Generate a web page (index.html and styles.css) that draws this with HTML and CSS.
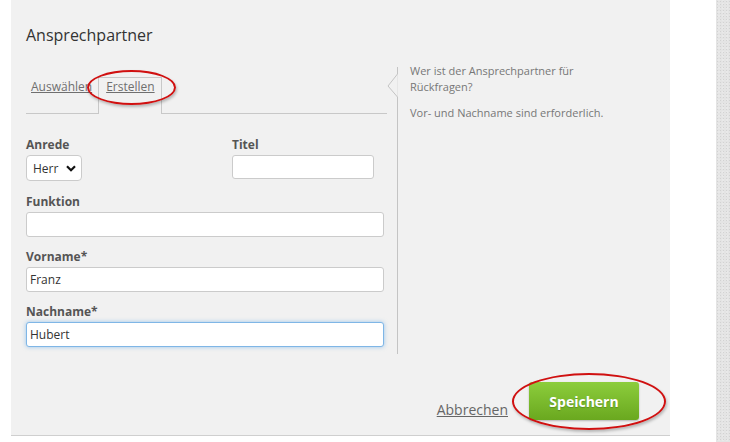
FILE: index.html
```html
<!DOCTYPE html>
<html lang="de">
<head>
<meta charset="utf-8">
<title>Ansprechpartner</title>
<link rel="stylesheet" href="styles.css">
</head>
<body>
<div class="page">
  <div class="panel">
    <h1 class="title">Ansprechpartner</h1>
    <div class="content">
      <div class="main">
        <div class="tabs">
          <a class="tab" href="#">Auswählen</a>
          <a class="tab tab-active" href="#">Erstellen</a>
        </div>
        <form class="form">
          <div class="row-two">
            <div class="field">
              <label class="label">Anrede</label>
              <div class="select">
                <span>Herr</span>
                <svg class="chev" width="10" height="7" viewBox="0 0 10 7"><path d="M1 1.2 L5 5.2 L9 1.2" fill="none" stroke="#111" stroke-width="2.2"/></svg>
              </div>
            </div>
            <div class="field">
              <label class="label">Titel</label>
              <input class="input input-titel" type="text">
            </div>
          </div>
          <div class="field">
            <label class="label">Funktion</label>
            <input class="input" type="text">
          </div>
          <div class="field">
            <label class="label">Vorname*</label>
            <input class="input" type="text" value="Franz">
          </div>
          <div class="field">
            <label class="label">Nachname*</label>
            <input class="input input-focus" type="text" value="Hubert">
          </div>
        </form>
      </div>
      <div class="divider">
        <svg class="caret" width="12" height="24" viewBox="0 0 12 24"><polyline points="10.5,0 1,12 10.5,23" fill="#f1f1f1" stroke="#c4c4c4" stroke-width="1"/><rect x="10.5" y="0.5" width="2" height="22" fill="#f1f1f1"/></svg>
      </div>
      <div class="help">
        <p>Wer ist der Ansprechpartner für Rückfragen?</p>
        <p>Vor- und Nachname sind erforderlich.</p>
      </div>
    </div>
    <div class="footer">
      <a class="cancel" href="#">Abbrechen</a>
      <button class="save" type="button">Speichern</button>
    </div>
  </div>
  <div class="gap"></div>
  <div class="texture"></div>
  <div class="mark mark-tab"></div>
  <div class="mark mark-save"></div>
</div>
</body>
</html>
```
FILE: styles.css
```css
html, body {
  margin: 0;
  padding: 0;
  background: #fff;
}
body {
  font-family: "Open Sans", "Liberation Sans", sans-serif;
  color: #333;
}
.page {
  position: relative;
  display: flex;
  width: 730px;
  height: 442px;
  overflow: hidden;
}
.panel {
  margin-left: 11px;
  width: 659px;
  height: 436px;
  box-sizing: border-box;
  background: #f1f1f1;
  border-bottom: 1px solid #cfcfcf;
  padding: 0 15px;
  display: flex;
  flex-direction: column;
  flex-shrink: 0;
}
.title {
  margin: 0;
  padding-top: 24px;
  font-size: 16px;
  line-height: 22px;
  font-weight: 400;
  color: #333;
}
.content {
  display: flex;
  margin-top: 17px;
}
.main {
  width: 361px;
  padding-top: 14px;
}
.tabs {
  display: flex;
  height: 36px;
  border-bottom: 1px solid #c8c8c8;
}
.tab {
  display: block;
  height: 37px;
  box-sizing: border-box;
  padding: 0 5px 19px 4px;
  border: 1px solid transparent;
  border-bottom: none;
  margin-bottom: -1px;
  font-size: 12px;
  line-height: 17px;
  color: #6f6f6f;
  text-decoration: underline;
}
.tab-active {
  padding: 0 6px 19px 7px;
  border-color: #c8c8c8;
  background: #f1f1f1;
}
.form {
  padding-top: 23px;
}
.row-two {
  display: flex;
}
.row-two .field:first-child {
  width: 206px;
}
.field {
  display: flex;
  flex-direction: column;
  align-items: flex-start;
  margin-bottom: 12px;
}
.row-two .field {
  margin-bottom: 13px;
}
.label {
  font-size: 12px;
  line-height: 16px;
  font-weight: 700;
  color: #555;
  margin-bottom: 2px;
}
.input {
  width: 358px;
  height: 25px;
  box-sizing: border-box;
  border: 1px solid #cbcbcb;
  border-radius: 3px;
  background: #fff;
  padding: 0 3px;
  font-family: "Open Sans", "Liberation Sans", sans-serif;
  font-size: 12px;
  color: #333;
  outline: none;
}
.input-titel {
  width: 142px;
  height: 24px;
}
.input-focus {
  border-color: #7fb6e6;
  box-shadow: 0 0 4px rgba(82, 160, 230, 0.55);
}
.select {
  width: 56px;
  height: 26px;
  box-sizing: border-box;
  border: 1px solid #cbcbcb;
  border-radius: 4px;
  background: #fff;
  display: flex;
  align-items: center;
  justify-content: space-between;
  padding: 0 5px 0 6px;
  font-size: 12px;
  color: #333;
}
.chev {
  display: block;
}
.divider {
  position: relative;
  margin-left: 10px;
  margin-top: 4px;
  width: 0;
  height: 287px;
  border-left: 1px solid #c4c4c4;
}
.caret {
  position: absolute;
  left: -11px;
  top: 7px;
}
.help {
  padding-left: 12px;
  width: 205px;
  font-size: 11px;
  line-height: 16px;
  color: #777;
}
.help p {
  margin: 0 0 10px;
}
.footer {
  margin-top: auto;
  display: flex;
  justify-content: flex-end;
  align-items: flex-end;
  gap: 21px;
  padding-right: 16px;
  padding-bottom: 15px;
}
.cancel {
  font-size: 14px;
  line-height: 20px;
  color: #666;
  text-decoration: underline;
}
.save {
  width: 110px;
  height: 38px;
  border: none;
  border-radius: 3px;
  background: linear-gradient(#8ccd3c, #6aa81f);
  box-shadow: 0 1px 2px rgba(0, 0, 0, 0.25);
  color: #fff;
  font-family: "Open Sans", "Liberation Sans", sans-serif;
  font-size: 14px;
  font-weight: 700;
  text-shadow: 0 1px 1px rgba(0, 0, 0, 0.2);
  padding: 0;
}
.gap {
  width: 46px;
  flex-shrink: 0;
}
.texture {
  flex: 1;
  background-color: #e4e4e4;
  background-image: radial-gradient(circle, #d2d2d2 0.7px, transparent 0.9px), radial-gradient(circle, #efefef 0.6px, transparent 0.8px);
  background-size: 3px 3px, 4px 4px;
  background-position: 0 0, 1px 2px;
}
.mark {
  position: absolute;
  border: 2px solid #d01010;
  border-radius: 50%;
  box-sizing: border-box;
  box-shadow: 1px 2px 3px rgba(0, 0, 0, 0.25);
}
.mark-tab {
  left: 87px;
  top: 70px;
  width: 89px;
  height: 35px;
}
.mark-save {
  left: 512px;
  top: 373px;
  width: 154px;
  height: 57px;
}
```
